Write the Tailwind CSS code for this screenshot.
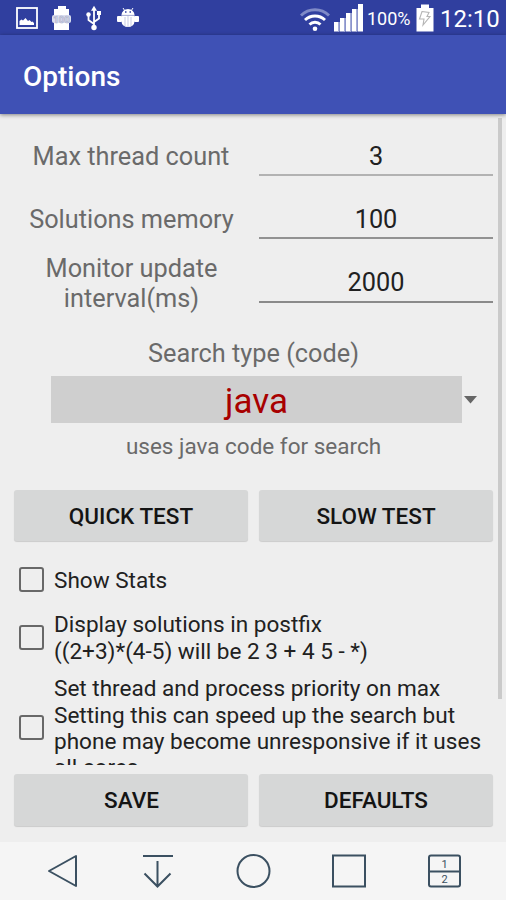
<!DOCTYPE html>
<html lang="en">
  <head>
    <meta charset="UTF-8" />
    <meta name="viewport" content="width=device-width, initial-scale=1.0" />
    <title>Options</title>
    <script src="https://cdn.jsdelivr.net/npm/@tailwindcss/browser@4"></script>
  </head>
  <body class="font-[Roboto,sans-serif] bg-[#eeeeee]">
    <div class="relative flex flex-col w-[506px] h-[900px] overflow-hidden">
      <!-- status bar -->
      <div class="flex items-center justify-between h-[35px] shrink-0 bg-[#303f9f] pl-4 pr-[8px] text-white">
        <div class="flex items-center gap-[14px]">
          <svg class="w-[22px] h-[22px] mt-px" viewBox="0 0 22 22" fill="none">
            <rect x="1" y="1" width="20" height="20" stroke="#fff" stroke-width="1.8" />
            <path d="M3.500 18v-4l2-1.500 1.500 1 2.500-2.500 2.500 3 1.500-1 2 2 1-.5 1.500 1.500v2z" fill="#fff" />
          </svg>
          <svg class="w-[20px] h-[26px]" viewBox="0 0 20 26">
            <path d="M6 1h8v3h3v21H2V4h4z" fill="#fff" />
            <rect x="0" y="10" width="19" height="8" rx="2" fill="#dcdff0" />
            <text x="9.500" y="17.500" text-anchor="middle" font-family="Roboto" font-size="9.500" font-weight="bold" fill="#f4f4f8" stroke="#a9aecb" stroke-width=".7">100</text>
          </svg>
          <svg class="w-[16px] h-[26px]" viewBox="0 0 16 26" fill="none" stroke="#fff" stroke-width="1.800">
            <path d="M8 4v19M8 19l-5.500-4V10M8 17l5-3.500V9" />
            <path d="M8 .8l3 5H5zM11 6h4v4h-4z" fill="#fff" stroke="none" />
            <circle cx="2.500" cy="9.500" r="2.200" fill="#fff" stroke="none" />
            <circle cx="8" cy="22.500" r="2.700" fill="#fff" stroke="none" />
          </svg>
          <svg class="w-[24px] h-[22px]" viewBox="0 0 24 22" fill="#fff">
            <path d="M5.500 8a6.500 6 0 0 1 13 0zM5.500 8.500h13v6a6.500 5.500 0 0 1-13 0z" />
            <rect x="1" y="9" width="5" height="6" rx="1" />
            <rect x="18" y="9" width="5" height="6" rx="1" />
            <path d="M7 1l2 3M17 1l-2 3" stroke="#fff" />
            <path d="M12 9v11M9 10v9M15 10v9M5.500 8.300h13" stroke="#b9bedd" stroke-width=".8" />
            <path d="M9 5h1.500M13.500 5H15" stroke="#303f9f" stroke-width="1.300" />
          </svg>
        </div>
        <div class="flex items-center">
          <svg class="w-[30px] h-[24px] mt-[4px] -ml-[3px]" viewBox="0 0 30 24" fill="none" stroke-width="2.900">
            <path d="M1 7.500a20 20 0 0 1 28 0" stroke="#7f8ac7" />
            <path d="M5 12a14.500 14.500 0 0 1 20 0M9.500 16.500a8 8 0 0 1 11 0" stroke="#fff" />
            <circle cx="15" cy="20.800" r="2.300" fill="#fff" />
          </svg>
          <svg class="w-[30px] h-[28px] ml-[4px] mr-[-1px] mt-[1px]" viewBox="0 0 30 28" fill="#fff">
            <path d="M0 18h5v9.500H0zM6 14h5v13.500H6zM12 9h5v18.500h-5zM18 5h5v22.500h-5zM24 0h5v27.500h-5z" />
            <path d="M4 18h1.800v9.500H4zM10 14h1.800v13.500H10zM16 9h1.800v18.500H16zM22 5h1.800v22.500H22z" fill="#a3abd8" />
          </svg>
          <span class="ml-[4px] mt-[2px] w-[45px] whitespace-nowrap text-[18px] leading-none">100%</span>
          <svg class="w-[18px] h-[28px] ml-[4px] mt-[1px] mr-[1px]" viewBox="0 0 18 28">
            <path d="M5 .5h8V4h4.500v23.500H.5V4H5z" fill="#fff" />
            <path d="M6 7.500l7 1-2 4h3l-7 8.500 1-6H3.500z" fill="none" stroke="#b5b5b5" stroke-width="1.100" />
          </svg>
          <span class="ml-[5px] mt-[2px] w-[58px] whitespace-nowrap text-[24px] leading-none">12:10</span>
        </div>
      </div>

      <!-- app bar -->
      <header class="relative z-10 flex items-center h-[79px] shrink-0 bg-[#3f51b5] pl-[23px] pt-[4px] shadow-[0_1px_4px_rgba(0,0,0,0.45)]">
        <h1 class="text-[28px] font-medium text-white">Options</h1>
      </header>

      <!-- scrolling options -->
      <main class="relative h-[651px] shrink-0 overflow-hidden px-[14px] text-[#6a6a6a]">
        <div class="absolute right-[4px] top-[4px] w-[4px] h-[581px] bg-[#cacaca]"></div>
        <div class="grid grid-cols-[234px_234px] gap-x-[11px] text-center text-[25.300px]">
          <label class="flex items-center justify-center h-[62px] pt-[24px]">Max thread count</label>
          <div class="h-[62px] pt-[26px] leading-[33px] border-b-2 border-[#b2b2b2] text-[#212121]">3</div>
          <label class="flex items-center justify-center h-[63px] pt-[25px] pl-px">Solutions memory</label>
          <div class="h-[63px] pt-[27px] leading-[33px] border-b-2 border-[#929292] text-[#212121]">100</div>
          <label class="flex items-center justify-center h-[64px] pt-[26px] pl-px leading-[30px]">Monitor update<br />interval(ms)</label>
          <div class="h-[64px] pt-[27px] leading-[33px] border-b-2 border-[#8a8a8a] text-[#212121]">2000</div>
        </div>

        <p class="mt-[36px] pl-px text-center text-[25.300px] leading-[30px]">Search type (code)</p>
        <div class="mt-[7px] ml-[37px] flex items-center">
          <div class="w-[411px] h-[47px] bg-[#cfcfcf] text-center text-[35px] leading-[52px] text-[#a80000]">java</div>
          <svg class="ml-[2px] w-[13px] h-[8px]" viewBox="0 0 13 8"><path d="M0 0h13L6.500 7.500z" fill="#666" /></svg>
        </div>
        <p class="mt-[9px] pl-px text-center text-[22.500px] leading-[28px]">uses java code for search</p>

        <div class="mt-[30px] grid grid-cols-[234px_234px] gap-x-[11px] text-[22.500px] font-medium text-[#141414]">
          <button class="h-[51px] pt-[3px] rounded-[3px] bg-[#d6d7d7] shadow-[0_1px_1px_rgba(0,0,0,0.15)]">QUICK TEST</button>
          <button class="h-[51px] pt-[3px] rounded-[3px] bg-[#d6d7d7] shadow-[0_1px_1px_rgba(0,0,0,0.15)]">SLOW TEST</button>
        </div>

        <div class="text-[22.550px] leading-[26.400px] text-[#212121]">
          <label class="flex items-center mt-[24px] ml-[5px] gap-[10px]">
            <span class="w-[25px] h-[25px] border-2 border-[#686868] rounded-[3px]"></span>
            <span class="pt-[3px]">Show Stats</span>
          </label>
          <label class="flex items-center mt-[15px] ml-[5px] gap-[10px]">
            <span class="w-[25px] h-[25px] border-2 border-[#686868] rounded-[3px]"></span>
            <span class="pt-[3px] whitespace-nowrap">Display solutions in postfix<br />((2+3)*(4-5) will be 2 3 + 4 5 - *)</span>
          </label>
          <label class="flex items-center mt-[8px] ml-[5px] gap-[10px]">
            <span class="w-[25px] h-[25px] border-2 border-[#686868] rounded-[3px]"></span>
            <span class="pt-[3px] whitespace-nowrap">Set thread and process priority on max<br />Setting this can speed up the search but<br />phone may become unresponsive if it uses<br />all cores</span>
          </label>
        </div>
      </main>

      <div class="grid grid-cols-[234px_234px] items-start gap-x-[11px] h-[77px] shrink-0 px-[14px] pt-[9px] text-[22.500px] font-medium text-[#141414]">
        <button class="h-[52px] pt-[2px] pl-px rounded-[3px] bg-[#d6d7d7] shadow-[0_1px_1px_rgba(0,0,0,0.15)]">SAVE</button>
        <button class="h-[52px] pt-[2px] rounded-[3px] bg-[#d6d7d7] shadow-[0_1px_1px_rgba(0,0,0,0.15)]">DEFAULTS</button>
      </div>

      <!-- navigation bar -->
      <nav class="flex justify-between h-[58px] shrink-0 bg-[#f5f5f5] pl-[45px] pr-[44px] pt-[10px]">
        <svg class="w-[36px] h-[36px]" viewBox="0 0 36 36" fill="none" stroke="#3b5061" stroke-width="2"><path d="M31 4v30L4 19z" stroke-linejoin="round" /></svg>
        <svg class="w-[36px] h-[36px]" viewBox="0 0 36 36" fill="none" stroke="#3b5061" stroke-width="2"><path d="M3 4h30M17.500 9v25M4.500 21.500L17.500 34.500 30.500 21.500" /></svg>
        <svg class="w-[36px] h-[36px]" viewBox="0 0 36 36" fill="none" stroke="#3b5061" stroke-width="2"><circle cx="17.500" cy="19" r="16" /></svg>
        <svg class="w-[36px] h-[36px]" viewBox="0 0 36 36" fill="none" stroke="#3b5061" stroke-width="2"><path d="M2 3.500h32v31H2z" /></svg>
        <svg class="w-[36px] h-[36px]" viewBox="0 0 36 36" fill="none" stroke="#3b5061" stroke-width="2">
          <rect x="3" y="3.500" width="31" height="31" rx="2" />
          <path d="M3 19.500h31" />
          <g font-family="Roboto" font-size="11" fill="#3b5061" stroke="none" text-anchor="middle">
            <text x="18.500" y="15.500">1</text>
            <text x="18.500" y="31">2</text>
          </g>
        </svg>
      </nav>
    </div>
  </body>
</html>
